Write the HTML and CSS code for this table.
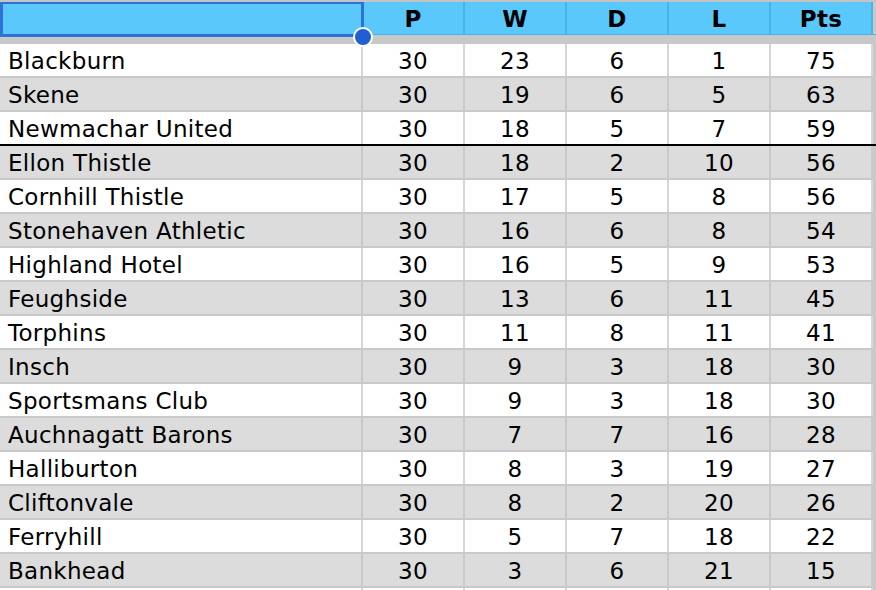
FILE: index.html
```html
<!DOCTYPE html>
<html>
<head>
<meta charset="utf-8">
<link rel="stylesheet" href="styles.css">
</head>
<body>
<div class="sheet">
  <div class="row head">
    <div class="cell name"></div>
    <div class="cell">P</div>
    <div class="cell">W</div>
    <div class="cell">D</div>
    <div class="cell">L</div>
    <div class="cell">Pts</div>
  </div>
  <div class="band"></div>
  <div class="body" id="body">
    <div class="row"><div class="cell name">Blackburn</div><div class="cell">30</div><div class="cell">23</div><div class="cell">6</div><div class="cell">1</div><div class="cell">75</div></div>
    <div class="row alt"><div class="cell name">Skene</div><div class="cell">30</div><div class="cell">19</div><div class="cell">6</div><div class="cell">5</div><div class="cell">63</div></div>
    <div class="row cut"><div class="cell name">Newmachar United</div><div class="cell">30</div><div class="cell">18</div><div class="cell">5</div><div class="cell">7</div><div class="cell">59</div></div>
    <div class="row alt"><div class="cell name">Ellon Thistle</div><div class="cell">30</div><div class="cell">18</div><div class="cell">2</div><div class="cell">10</div><div class="cell">56</div></div>
    <div class="row"><div class="cell name">Cornhill Thistle</div><div class="cell">30</div><div class="cell">17</div><div class="cell">5</div><div class="cell">8</div><div class="cell">56</div></div>
    <div class="row alt"><div class="cell name">Stonehaven Athletic</div><div class="cell">30</div><div class="cell">16</div><div class="cell">6</div><div class="cell">8</div><div class="cell">54</div></div>
    <div class="row"><div class="cell name">Highland Hotel</div><div class="cell">30</div><div class="cell">16</div><div class="cell">5</div><div class="cell">9</div><div class="cell">53</div></div>
    <div class="row alt"><div class="cell name">Feughside</div><div class="cell">30</div><div class="cell">13</div><div class="cell">6</div><div class="cell">11</div><div class="cell">45</div></div>
    <div class="row"><div class="cell name">Torphins</div><div class="cell">30</div><div class="cell">11</div><div class="cell">8</div><div class="cell">11</div><div class="cell">41</div></div>
    <div class="row alt"><div class="cell name">Insch</div><div class="cell">30</div><div class="cell">9</div><div class="cell">3</div><div class="cell">18</div><div class="cell">30</div></div>
    <div class="row"><div class="cell name">Sportsmans Club</div><div class="cell">30</div><div class="cell">9</div><div class="cell">3</div><div class="cell">18</div><div class="cell">30</div></div>
    <div class="row alt"><div class="cell name">Auchnagatt Barons</div><div class="cell">30</div><div class="cell">7</div><div class="cell">7</div><div class="cell">16</div><div class="cell">28</div></div>
    <div class="row"><div class="cell name">Halliburton</div><div class="cell">30</div><div class="cell">8</div><div class="cell">3</div><div class="cell">19</div><div class="cell">27</div></div>
    <div class="row alt"><div class="cell name">Cliftonvale</div><div class="cell">30</div><div class="cell">8</div><div class="cell">2</div><div class="cell">20</div><div class="cell">26</div></div>
    <div class="row"><div class="cell name">Ferryhill</div><div class="cell">30</div><div class="cell">5</div><div class="cell">7</div><div class="cell">18</div><div class="cell">22</div></div>
    <div class="row alt"><div class="cell name">Bankhead</div><div class="cell">30</div><div class="cell">3</div><div class="cell">6</div><div class="cell">21</div><div class="cell">15</div></div>
    <div class="row"><div class="cell name"></div><div class="cell"></div><div class="cell"></div><div class="cell"></div><div class="cell"></div><div class="cell"></div></div>
  </div>
  <div class="selection"></div>
  <div class="handle"></div>
</div>
</body>
</html>
```
FILE: styles.css
```css
html, body {
  margin: 0;
  padding: 0;
  background: #ffffff;
  overflow: hidden;
}
.sheet {
  position: relative;
  width: 876px;
  font-family: "DejaVu Sans", sans-serif;
  font-size: 23px;
  letter-spacing: 0.3px;
  color: #000;
  border-top: 2px solid #c4c4c4;
  box-sizing: border-box;
  height: 590px;
  overflow: hidden;
}
.row {
  display: grid;
  grid-template-columns: 362px 103px 102px 102px 102px 102px 3px;
  height: 34px;
  box-sizing: border-box;
  border-bottom: 2px solid #c9c9c9;
  background: #ffffff;
}
.row::after {
  content: "";
  background: #c9c9c9;
}
.row.alt {
  background: #dcdcdc;
}
.row.cut {
  border-bottom: 2px solid #000;
}
.cell {
  display: flex;
  align-items: center;
  justify-content: center;
  border-right: 2px solid #d6d6d6;
  line-height: 1;
  padding-top: 3px;
  box-sizing: border-box;
  white-space: nowrap;
}
.cell:first-child {
  border-right: none;
}
.cell:nth-child(2) {
  border-left: 2px solid #d6d6d6;
  margin-left: -1px;
}
.row.alt .cell {
  border-color: #c9c9c9;
}
.cell.name {
  justify-content: flex-start;
  padding-left: 8px;
}
.row.head {
  height: 33px;
  background: #5ac8fa;
  border-bottom: 1px solid #48b4e6;
  font-weight: bold;
}
.row.head .cell {
  border-color: #48b4e6;
  padding-top: 3px;
}
.band {
  height: 9px;
  background: #c8c8c8;
}
.selection {
  position: absolute;
  left: 0;
  top: -1px;
  width: 364px;
  height: 36px;
  border: 3px solid #2e71d8;
  box-sizing: border-box;
}
.handle {
  position: absolute;
  left: 353px;
  top: 25px;
  width: 20px;
  height: 20px;
  border-radius: 50%;
  background: #1f5fd0;
  border: 2px solid #ffffff;
  box-sizing: border-box;
}
```
